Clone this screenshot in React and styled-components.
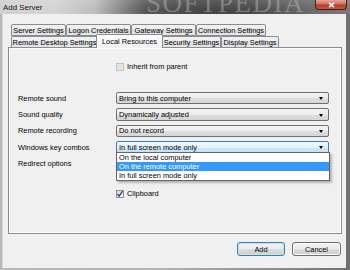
import React from 'react'
import styled, { createGlobalStyle, css } from 'styled-components'

const GlobalStyle = createGlobalStyle`
  html, body {
    margin: 0;
    padding: 0;
    background: #8a8a8a;
  }
  body {
    font-family: "Liberation Sans", Arial, sans-serif;
  }
`

const UI_FONT = 7.4

const rowTabs = [
    { label: 'Server Settings', w: 55 },
    { label: 'Logon Credentials', w: 65 },
    { label: 'Gateway Settings', w: 65 },
    { label: 'Connection Settings', w: 70 },
]

const frontTabs = [
    { label: 'Remote Desktop Settings', w: 87 },
    { label: 'Local Resources', w: 64, active: true },
    { label: 'Security Settings', w: 59 },
    { label: 'Display Settings', w: 58 },
]

const fields = [
    { label: 'Remote sound', value: 'Bring to this computer' },
    { label: 'Sound quality', value: 'Dynamically adjusted' },
    { label: 'Remote recording', value: 'Do not record' },
]

const keyOptions = ['On the local computer', 'On the remote computer', 'In full screen mode only']

function Check({ checked, disabled }) {
    return (
        <CheckBox $disabled={disabled}>
            {checked && (
                <svg width="8" height="8" viewBox="0 0 8 8">
                    <path d="M1.4 3.9 L3.1 6.2 L6.6 1.2" fill="none" stroke="#2d3f78" strokeWidth="1.3" />
                </svg>
            )}
        </CheckBox>
    )
}

export default function App() {
    return (
        <>
            <GlobalStyle />
            <Window>
                <TitleBar>
                    <Title>Add Server</Title>
                    <Watermark>SOFTPEDIA</Watermark>
                    <CloseButton>
                        <svg width="7" height="6" viewBox="0 0 7 6">
                            <path d="M1 0.8 L6 5.2 M6 0.8 L1 5.2" stroke="#fff" strokeWidth="1.6" />
                        </svg>
                    </CloseButton>
                </TitleBar>

                <Client>
                    <TabBar>
                        <TabRow>
                            {rowTabs.map(t => (
                                <Tab key={t.label} $w={t.w} $back>{t.label}</Tab>
                            ))}
                        </TabRow>
                        <TabRow>
                            {frontTabs.map(t => (
                                <Tab key={t.label} $w={t.w} $active={t.active}>{t.label}</Tab>
                            ))}
                        </TabRow>
                    </TabBar>

                    <Panel>
                        <InheritRow>
                            <Check disabled />
                            <Text>Inherit from parent</Text>
                        </InheritRow>

                        <FieldGrid>
                            {fields.map(f => (
                                <React.Fragment key={f.label}>
                                    <Label>{f.label}</Label>
                                    <Combo>{f.value}</Combo>
                                </React.Fragment>
                            ))}

                            <Label>Windows key combos</Label>
                            <Combo $focused>
                                In full screen mode only
                                <DropList>
                                    {keyOptions.map((o, i) => (
                                        <DropItem key={o} $selected={i === 1}>{o}</DropItem>
                                    ))}
                                </DropList>
                            </Combo>

                            <Label>Redirect options</Label>
                            <span />
                            <span />
                            <span />
                            <span />
                            <CheckRow>
                                <Check checked />
                                <Text>Clipboard</Text>
                            </CheckRow>
                        </FieldGrid>
                    </Panel>

                    <Footer>
                        <Button $default>Add</Button>
                        <Button>Cancel</Button>
                    </Footer>
                </Client>
            </Window>
        </>
    )
}

const Window = styled.div`
    width: 350px;
    height: 270px;
    display: flex;
    flex-direction: column;
    overflow: hidden;
    background: linear-gradient(90deg, #b9b9b9 0%, #b3b3b3 45%, #8c8c8c 80%, #6f6f6f 100%);
`

const TitleBar = styled.div`
    position: relative;
    height: 14px;
    flex: none;
    display: flex;
    align-items: center;
    overflow: hidden;
    background:
        linear-gradient(180deg, rgba(255,255,255,0.12), rgba(255,255,255,0) 70%),
        linear-gradient(90deg, #d0d0d0 0, #d4d4d4 55px, #bdbdbd 95px, #8a8a8a 120px,
            #575757 145px, #464646 200px, #4a4a4a 250px, #5f5f5f 290px, #6f6f6f 320px, #7a7a7a 350px);
`

const Title = styled.span`
    margin-left: 3px;
    font-size: 7.9px;
    color: #0c0c0c;
    text-shadow: 0 0 3px rgba(255,255,255,0.7);
    z-index: 1;
`

const Watermark = styled.span`
    position: absolute;
    left: 146px;
    top: -12px;
    font-family: "Liberation Serif", "Times New Roman", serif;
    font-size: 27px;
    letter-spacing: 1.5px;
    color: rgba(190,190,190,0.45);
`

const CloseButton = styled.div`
    margin-left: auto;
    margin-right: 3px;
    align-self: flex-start;
    width: 30px;
    height: 9px;
    display: flex;
    align-items: center;
    justify-content: center;
    border: 1px solid #4d1d16;
    border-top: none;
    border-radius: 0 0 4px 4px;
    background: linear-gradient(180deg, #e3a69a 0%, #d2705f 45%, #b93a28 55%, #c9553f 100%);
    z-index: 1;
`

const Client = styled.div`
    flex: 1;
    margin: 0 4px 2px 2px;
    padding: 10px 4px 12px 5px;
    display: flex;
    flex-direction: column;
    background: #f0f0f0;
    border-left: 1px solid #d8d8d8;
    box-sizing: border-box;
`

const TabBar = styled.div`
    display: flex;
    flex-direction: column;
    padding-left: 3px;
    height: 23px;
    flex: none;
`

const TabRow = styled.div`
    display: flex;
    align-items: flex-end;
`

const Tab = styled.div`
    width: ${p => p.$w}px;
    height: ${p => (p.$back ? 12 : 11)}px;
    box-sizing: border-box;
    display: flex;
    align-items: center;
    justify-content: center;
    font-size: ${UI_FONT}px;
    color: #000;
    white-space: nowrap;
    border: 1px solid #898c95;
    border-bottom: ${p => (p.$back ? '1px solid #898c95' : 'none')};
    border-radius: 2px 2px 0 0;
    background: linear-gradient(180deg, #f3f3f3 0%, #ebebeb 50%, #dedede 51%, #e6e6e6 100%);

    ${p => p.$active && css`
        height: 14px;
        width: ${p.$w + 3}px;
        margin: -2px -1px -1px -2px;
        padding-bottom: 1px;
        position: relative;
        z-index: 1;
        background: linear-gradient(180deg, #ffffff 0%, #f7f7f7 50%, #f0f0f0 100%);
    `}
`

const Panel = styled.div`
    height: 187px;
    flex: none;
    box-sizing: border-box;
    border: 1px solid #898c95;
    box-shadow: inset -1px -1px 0 #ffffff, inset 1px 1px 0 #fbfbfb;
    padding: 14px 0 0 9px;
    display: flex;
    flex-direction: column;
`

const Text = styled.span`
    font-size: ${UI_FONT}px;
    color: #000;
    white-space: nowrap;
`

const InheritRow = styled.div`
    margin-left: 98px;
    height: 9px;
    display: flex;
    align-items: center;
    gap: 3px;
`

const CheckRow = styled.div`
    display: flex;
    align-items: center;
    gap: 3px;
    align-self: start;
    margin-top: -1px;
`

const CheckBox = styled.span`
    width: 8px;
    height: 8px;
    box-sizing: border-box;
    flex: none;
    display: inline-flex;
    align-items: center;
    justify-content: center;
    border: 1px solid ${p => (p.$disabled ? '#c2c2c2' : '#8e8f8f')};
    background: ${p => (p.$disabled
        ? '#e4e4e4'
        : 'linear-gradient(135deg, #dcdcdc, #fbfbfb)')};

    svg {
        display: block;
        margin: -1px;
    }
`

const FieldGrid = styled.div`
    margin-top: 21px;
    display: grid;
    grid-template-columns: 98px 213px;
    grid-auto-rows: 12.4px;
    row-gap: 4px;
    align-items: center;
`

const Label = styled.span`
    font-size: ${UI_FONT}px;
    color: #000;
    white-space: nowrap;
`

const Combo = styled.div`
    position: relative;
    height: 12.4px;
    box-sizing: border-box;
    display: flex;
    align-items: center;
    padding-left: 2px;
    font-size: ${UI_FONT}px;
    color: #000;
    white-space: nowrap;
    border: 1px solid ${p => (p.$focused ? '#3c7fb1' : '#707070')};
    border-radius: 2px;
    background: ${p => (p.$focused
        ? 'linear-gradient(180deg, #eef7fd 0%, #e2f2fc 50%, #cfe8f8 51%, #c0e0f5 100%)'
        : 'linear-gradient(180deg, #f4f4f4 0%, #ececec 50%, #dfdfdf 51%, #d4d4d4 100%)')};

    &::after {
        content: '';
        position: absolute;
        right: 5px;
        top: 50%;
        margin-top: -1px;
        border-left: 2.5px solid transparent;
        border-right: 2.5px solid transparent;
        border-top: 3px solid #000;
    }
`

const DropList = styled.div`
    position: absolute;
    left: -1px;
    top: calc(100% - 1px);
    width: calc(100% + 3px);
    box-sizing: border-box;
    border: 1px solid #646464;
    background: #fff;
    box-shadow: 2px 2px 2px rgba(0,0,0,0.25);
    z-index: 2;
`

const DropItem = styled.div`
    height: 9.3px;
    display: flex;
    align-items: center;
    padding-left: 2px;
    font-size: ${UI_FONT}px;
    color: ${p => (p.$selected ? '#fff' : '#000')};
    background: ${p => (p.$selected ? '#3399ff' : 'transparent')};
`

const Footer = styled.div`
    margin-top: 8px;
    display: flex;
    justify-content: flex-end;
    gap: 7px;
    padding-right: 1px;
`

const Button = styled.div`
    width: ${p => (p.$default ? 48 : 49)}px;
    height: 14px;
    box-sizing: border-box;
    display: flex;
    align-items: center;
    justify-content: center;
    font-size: ${UI_FONT}px;
    color: #000;
    border: 1px solid ${p => (p.$default ? '#3c7fb1' : '#707070')};
    border-radius: 3px;
    background: linear-gradient(180deg, #f2f2f2 0%, #ebebeb 50%, #dddddd 51%, #cfcfcf 100%);
    box-shadow: ${p => (p.$default ? 'inset 0 0 0 1px #bfe4f8' : 'inset 0 0 0 1px #fbfbfb')};
`
